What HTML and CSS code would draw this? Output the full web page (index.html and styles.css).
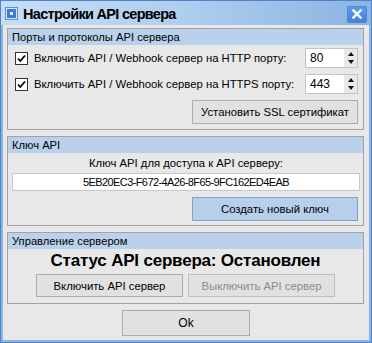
FILE: index.html
```html
<!DOCTYPE html>
<html>
<head>
<meta charset="utf-8">
<link rel="stylesheet" href="styles.css">
</head>
<body>
<div class="window">
  <div class="titlebar">
    <span class="app-icon"><span class="app-icon-dot"></span></span>
    <span class="title">Настройки API сервера</span>
    <span class="close">
      <svg width="10" height="10" viewBox="0 0 10 10"><path d="M1.5 1.5 L8.5 8.5 M8.5 1.5 L1.5 8.5" stroke="#fff" stroke-width="2.4" stroke-linecap="square"/></svg>
    </span>
  </div>
  <div class="client">
    <section class="group g1">
      <div class="group-head">Порты и протоколы API сервера</div>
      <div class="group-body body1">
        <div class="row">
          <span class="check"><svg width="11" height="11" viewBox="0 0 11 11"><path d="M2 5.5 L4.3 8 L9 2.5" fill="none" stroke="#000" stroke-width="1.8"/></svg></span>
          <span class="row-label">Включить API / Webhook сервер на HTTP порту:</span>
          <span class="spin"><span class="spin-val">80</span><span class="spin-arrows"><span class="arr up"></span><span class="arr down"></span></span></span>
        </div>
        <div class="row">
          <span class="check"><svg width="11" height="11" viewBox="0 0 11 11"><path d="M2 5.5 L4.3 8 L9 2.5" fill="none" stroke="#000" stroke-width="1.8"/></svg></span>
          <span class="row-label">Включить API / Webhook сервер на HTTPS порту:</span>
          <span class="spin"><span class="spin-val">443</span><span class="spin-arrows"><span class="arr up"></span><span class="arr down"></span></span></span>
        </div>
        <div class="btn-row">
          <button class="btn ssl">Установить SSL сертификат</button>
        </div>
      </div>
    </section>
    <section class="group g2">
      <div class="group-head">Ключ API</div>
      <div class="group-body body2">
        <div class="key-label">Ключ API для доступа к API серверу:</div>
        <div class="key-input">5EB20EC3-F672-4A26-8F65-9FC162ED4EAB</div>
        <div class="btn-row">
          <button class="btn btn-blue newkey">Создать новый ключ</button>
        </div>
      </div>
    </section>
    <section class="group g3">
      <div class="group-head">Управление сервером</div>
      <div class="group-body body3">
        <div class="status">Статус API сервера: Остановлен</div>
        <div class="ctl-row">
          <button class="btn ctl">Включить API сервер</button>
          <button class="btn ctl disabled">Выключить API сервер</button>
        </div>
      </div>
    </section>
    <div class="ok-row">
      <button class="btn ok">Ok</button>
    </div>
  </div>
</div>
</body>
</html>
```

FILE: styles.css
```css
* { box-sizing: border-box; }
html, body { margin: 0; padding: 0; }
body {
  width: 372px;
  height: 343px;
  font-family: "Liberation Sans", Arial, sans-serif;
  font-size: 11.3px;
  color: #000;
  background: #fff;
}
.window {
  width: 372px;
  height: 343px;
  border: 1px solid #4f83c9;
  background: #8db5e3;
  padding: 0 2px 2px 2px;
  display: flex;
  flex-direction: column;
}
.titlebar {
  height: 24px;
  flex: none;
  margin: 0 -2px;
  padding: 0 4px 0 4px;
  display: flex;
  align-items: center;
  background: linear-gradient(to right, #c7ddf5 0%, #b2cff0 45%, #8bb4e2 100%);
}
.app-icon {
  width: 11px;
  height: 11px;
  margin-left: 1px;
  margin-top: 1px;
  background: #3d7ad6;
  border: 1px solid #d9e6f7;
  box-shadow: 0 0 0 1px #5a8ed6;
  display: flex;
  align-items: center;
  justify-content: center;
}
.app-icon-dot {
  width: 3px;
  height: 3px;
  background: #e8f0fb;
}
.title {
  margin-left: 6px;
  font-weight: bold;
  font-size: 14.5px;
  letter-spacing: -0.7px;
  color: #000;
  flex: 1;
  padding-top: 1px;
}
.close {
  width: 20px;
  height: 17px;
  margin-top: 2px;
  border-radius: 2px;
  background: linear-gradient(#5d9ceb, #4282dc);
  border: 1px solid #4f86d6;
  display: flex;
  align-items: center;
  justify-content: center;
}
.client {
  flex: 1;
  background: #e8e8e8;
  padding: 3px 5px 0 4px;
  display: flex;
  flex-direction: column;
  gap: 6px;
}
.group {
  border: 1px solid #a3a3a3;
  background: #e8e8e8;
}
.group-head {
  height: 16px;
  line-height: 16px;
  background: #b9d1ea;
  padding-left: 4px;
  font-size: 11.2px;
  color: #000;
}
.group-body {
  display: flex;
  flex-direction: column;
}
.body1 {
  padding: 3px 5px 5px 7px;
  gap: 6px;
}
.row {
  height: 20px;
  display: flex;
  align-items: center;
}
.check {
  width: 13px;
  height: 13px;
  background: #fff;
  border: 1px solid #333;
  display: flex;
  align-items: center;
  justify-content: center;
}
.row-label {
  margin-left: 6px;
  flex: 1;
  white-space: nowrap;
}
.spin {
  width: 53px;
  height: 20px;
  background: #fff;
  border: 1px solid #c5c5c5;
  display: flex;
  align-items: center;
}
.spin-val {
  flex: 1;
  padding-left: 4px;
  font-size: 12px;
}
.spin-arrows {
  width: 13px;
  height: 18px;
  background: #e9e9e9;
  display: flex;
  flex-direction: column;
  align-items: center;
  justify-content: center;
  gap: 4px;
}
.arr {
  width: 0;
  height: 0;
  border-left: 3px solid transparent;
  border-right: 3px solid transparent;
}
.arr.up { border-bottom: 4px solid #111; }
.arr.down { border-top: 4px solid #111; }
.btn-row {
  display: flex;
  justify-content: flex-end;
}
.btn {
  font-family: "Liberation Sans", Arial, sans-serif;
  font-size: 11.3px;
  color: #000;
  background: #e1e1e1;
  border: 1px solid #acacac;
  padding: 0;
  margin: 0;
  border-radius: 0;
}
.ssl {
  width: 166px;
  height: 24px;
}
.body2 {
  padding: 2px 3px 4px 4px;
  align-items: stretch;
}
.key-label {
  text-align: center;
  height: 16px;
  line-height: 16px;
  margin-bottom: 2px;
}
.key-input {
  height: 18px;
  line-height: 16px;
  background: #fff;
  border: 1px solid #c8c8c8;
  text-align: center;
  letter-spacing: -0.6px;
  font-size: 11px;
}
.body2 .btn-row {
  margin-top: 6px;
  padding-right: 2px;
}
.btn-blue {
  background: #b7cfeb;
  border: 1px solid #7da4d3;
}
.newkey {
  width: 166px;
  height: 24px;
}
.body3 {
  padding: 1px 0 6px 0;
  align-items: center;
}
.status {
  font-size: 17px;
  font-weight: bold;
  height: 22px;
  line-height: 22px;
  font-family: "Liberation Sans", Arial, sans-serif;
  letter-spacing: -0.2px;
}
.ctl-row {
  display: flex;
  gap: 5px;
  margin-top: 2px;
}
.ctl {
  width: 147px;
  height: 23px;
}
.ctl.disabled {
  color: #8c8c8c;
  border-color: #bfbfbf;
}
.ok-row {
  display: flex;
  justify-content: center;
  padding-left: 1px;
}
.ok {
  width: 128px;
  height: 26px;
  font-size: 12px;
}
```
